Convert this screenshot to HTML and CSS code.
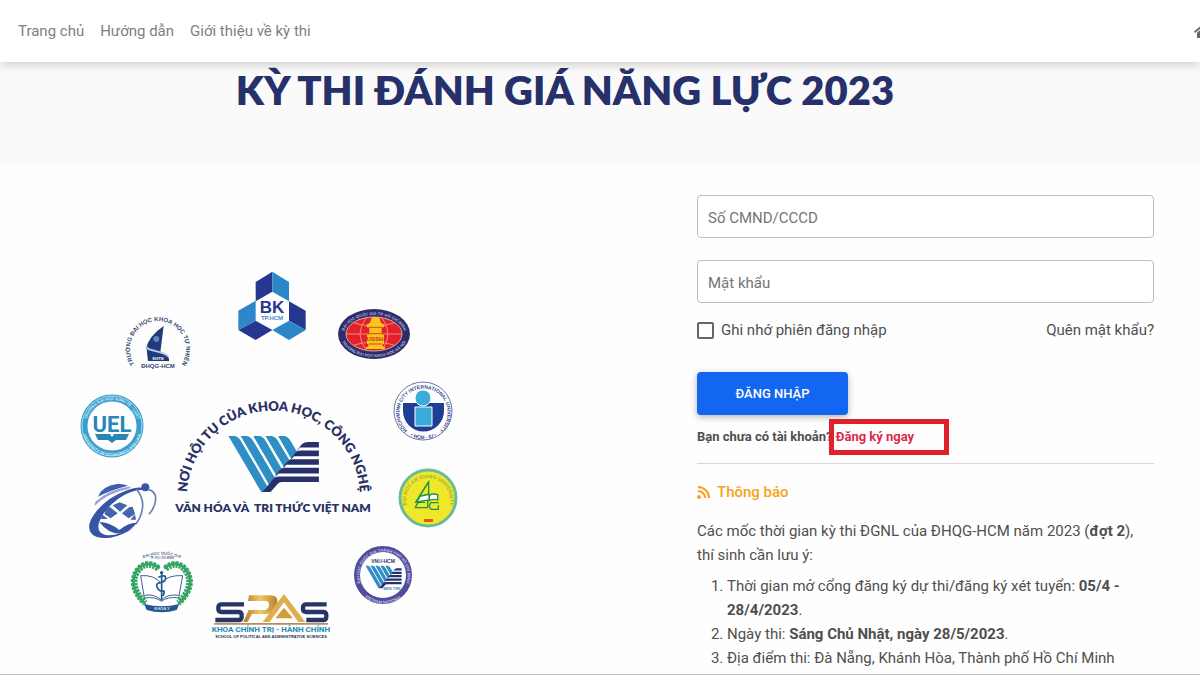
FILE: index.html
```
<!DOCTYPE html>
<html lang="vi">

<head>
    <meta charset="UTF-8">
    <meta name="viewport" content="width=device-width, initial-scale=1.0">
    <title>Kỳ thi đánh giá năng lực 2023</title>
    <link rel="stylesheet" href="styles.css">
</head>

<body>
    <header class="navbar">
        <nav>
            <a href="#">Trang chủ</a>
            <a href="#">Hướng dẫn</a>
            <a href="#">Giới thiệu về kỳ thi</a>
        </nav>
        <a href="#" class="home" aria-label="Home">
            <svg width="18" height="16" viewBox="0 0 18 16" fill="#666">
                <path d="M9 1 0 8.500l1.200 1.400L9 3.400l7.800 6.500L18 8.500l-3-2.500V2h-2v2.300z" />
                <path d="M9 4.800 3 9.800V15h4.500v-4h3v4H15V9.800z" />
            </svg>
        </a>
    </header>

    <div class="banner">
        <h1>KỲ THI ĐÁNH GIÁ NĂNG LỰC 2023</h1>
    </div>

    <main>
        <div class="logos">
            <svg viewBox="60 260 420 390" role="img" aria-label="Các trường thành viên">
                <defs>
                    <symbol id="vnu" viewBox="200 165 280 175">
                        <g fill="#2f8fc5">
                            <path d="M204 168h18q13 2 21 17l78 134-9 18h-9z" />
                            <path d="M241 168h18q13 2 21 17l64 109-18 20z" />
                            <path d="M279 168h18q13 2 21 17l48 84-17 19z" />
                            <path d="M316 168h18q13 2 21 17l34 58-17 20z" />
                            <path d="M354 168h18q13 2 21 17l19 33-18 20z" />
                        </g>
                        <g fill="#27306b">
                            <path d="M477 186v17h-57l-18 20 21-27q8-10 22-10z" />
                            <path d="M477 212v17h-75l-16 16 18-24q7-9 16-9z" />
                            <path d="M477 238v17h-99l-16 16 18-24q7-9 16-9z" />
                            <path d="M477 264v17h-122l-16 16 18-24q7-9 16-9z" />
                            <path d="M477 290v17h-112q-8 0-14 7l-20 23h-24l30-37q8-10 20-10z" />
                        </g>
                    </symbol>
                    <linearGradient id="gold">
                        <stop offset="0" stop-color="#b5792a" />
                        <stop offset=".5" stop-color="#f1ca63" />
                        <stop offset="1" stop-color="#b8802f" />
                    </linearGradient>
                    <path id="arc-main" d="M187 497A86 86 0 0 1 360 497" />
                    <path id="arc-khtn" d="M135 365A28 28 0 1 1 181 365" />
                    <path id="arc-ussh-top" d="M344 334A30 19 0 0 1 404 334" />
                    <path id="arc-ussh-bottom" d="M340 334A34 23 0 0 0 408 334" />
                    <path id="arc-uel-top" d="M86 426A26 26 0 0 1 138 426" />
                    <path id="arc-uel-bottom" d="M82 426A30 30 0 0 0 142 426" />
                    <path id="arc-iu" d="M407 430A24 24 0 1 1 440 430" />
                    <path id="arc-iu-bottom" d="M406 433A28 28 0 0 0 441 433" />
                    <path id="arc-ag" d="M411 514A22 22 0 1 1 445 514" />
                    <path id="arc-med" d="M142 559Q162 550 182 559" />
                    <path id="arc-dgnl" d="M366 592A24 24 0 1 1 401 592" />
                    <path id="arc-dgnl-bottom" d="M362 594A29 29 0 0 0 405 594" />
                </defs>

                <!-- khoa hoc tu nhien -->
                <g transform="translate(60 260) scale(.3333)">
                    <path fill="#223a7a" d="M311 198l-10 79q-25-12-43-10 8-39 53-69z" />
                    <path fill="#223a7a" d="M260 268q27-4 43 8 26 10 25 27h-64z" />
                    <path fill="none" stroke="#b9cbe4" stroke-width="6" d="M258 259q3 10 25 13 34 9 42 17" />
                    <circle cx="289" cy="237" r="9" fill="#5f83bd" />
                </g>
                <text class="tiny" x="158" y="360" fill="#fff" font-size="4">KHTN</text>
                <text class="tiny" x="158" y="368" fill="#35456f" font-size="6">ĐHQG-HCM</text>
                <text class="arc" fill="#35456f" font-size="6"><textPath href="#arc-khtn" startOffset="50%">TRƯỜNG ĐẠI HỌC KHOA HỌC TỰ NHIÊN</textPath></text>

                <!-- bach khoa -->
                <g transform="translate(220 260) scale(.3333)">
                    <g fill="#27378f">
                        <path d="M107 66l50-31v60l-50 29z" />
                        <path d="M55 210l52-28 50 28-50 30z" />
                        <path d="M207 124l50 28v58l-50-28z" />
                    </g>
                    <g fill="#2d86ca">
                        <path d="M157 35l50 31v58l-50-29z" />
                        <path d="M55 152l52-30v60l-52 28z" />
                        <path d="M157 210l50-28 50 28-50 30z" />
                    </g>
                </g>
                <text class="tiny" x="272" y="313" fill="#27378f" font-size="17">BK</text>
                <text class="tiny" x="272" y="320" fill="#4a8cc4" font-size="6">TP.HCM</text>

                <!-- ussh -->
                <ellipse cx="374" cy="334" rx="36" ry="25" fill="#2d2c6c" />
                <ellipse cx="374" cy="334" rx="28" ry="17" fill="#e3212b" stroke="#d9b0a0" />
                <path d="M346 334h56M354 323q20 6 40 0M354 345q20-6 40 0M366 318q-12 16 0 32M382 318q12 16 0 32" fill="none" stroke="#f08a76" />
                <g transform="translate(220 260) scale(.3333)">
                    <path fill="#fbc31c" d="M456 172h22l5 16 10 6v8h-8v22h7v28h-4v8h7v7h-57v-7h7v-8h-4v-28h7v-22h-8v-8l10-6z" />
                    <path stroke="#d6451f" stroke-width="3" d="M448 202h37M448 221h37M447 252h38" />
                </g>
                <text class="tiny" x="375" y="341" fill="#c3301f" font-size="6">USSH</text>
                <text class="arc" fill="#b4b3d6" font-size="4"><textPath href="#arc-ussh-top" startOffset="50%">ĐẠI HỌC QUỐC GIA TP. HỒ CHÍ MINH</textPath></text>
                <text class="arc" fill="#b4b3d6" font-size="4"><textPath href="#arc-ussh-bottom" startOffset="50%">TRƯỜNG ĐẠI HỌC KHOA HỌC XÃ HỘI</textPath></text>

                <!-- uel -->
                <circle cx="112" cy="426" r="28" fill="none" stroke="#3a9fce" stroke-width="7" />
                <circle cx="112" cy="426" r="30" fill="none" stroke="#a9d7ea" />
                <text class="arc" fill="#d5edf6" font-size="4"><textPath href="#arc-uel-top" startOffset="50%">TRƯỜNG ĐẠI HỌC KINH TẾ - LUẬT</textPath></text>
                <text class="arc" fill="#d5edf6" font-size="4"><textPath href="#arc-uel-bottom" startOffset="50%">UNIVERSITY OF ECONOMICS AND LAW</textPath></text>
                <text class="uel" x="112" y="432" fill="#2788b8">UEL</text>
                <path d="M95 434h15l2 3 2-3h15l-3 6h-10l-4 3-4-3H98z" fill="#2788b8" />

                <!-- cntt -->
                <g transform="translate(60 380) scale(.3333)">
                    <path fill="#3f5fae" d="M114 350q12-32 57-38 22-1 33 5-52 13-90 33z" />
                    <path fill="#94a5cf" d="M106 366q42-39 108-47l-9 8q-60 10-102 51z" />
                    <path fill="#3656a5" d="M252 325q-14-8-55 7-58 21-94 70-27 39-8 59 16 17 56 12 35-6 71-30-49 26-84 22-31-5-20-40 14-38 57-69 41-29 77-26z" />
                    <circle cx="256" cy="322" r="12" fill="#3656a5" />
                    <path fill="none" stroke="#6e7fb4" stroke-width="5" d="M266 329q20 5 21 26 1 24-20 48M229 327q24 29 18 60-4 26-19 45" />
                    <path fill="#3656a5" d="M118 426q30 0 60 24 28-23 53-22-24 31-53 33-34-1-60-35z" />
                    <path fill="#4465b0" d="M158 376l21-9 23 9-22 19zM151 382l22 18-21 15-19-13 8-22zM207 382l-21 18 20 15 19-13-7-22zM126 403l18 14h-21zM225 403l3 16h-17z" />
                    <path fill="#fff" d="M180 406l17 17-18 22-17-22z" />
                </g>

                <!-- y khoa -->
                <g transform="translate(110 535) scale(.3333)">
                    <path fill="none" stroke="#35a566" stroke-width="8" d="M149 100q-36-28-65 2-36 47 22 105M162 100q36-28 65 2 36 47-22 105" />
                    <path fill="none" stroke="#35a566" stroke-width="20" stroke-dasharray="8 3" d="M145 100q-34-25-59 3-35 46 19 101M166 100q34-25 59 3 35 46-19 101" />
                    <path fill="#fff" stroke="#3b6190" stroke-width="3" d="M92 122q40-3 61 22 22-25 65-22l-12 67q-33-5-52 10-18-15-51-10z" />
                    <path fill="none" stroke="#3b6190" stroke-width="3" d="M103 181q30-5 51 14 20-19 52-14" />
                    <path fill="none" stroke="#27578f" stroke-width="5" d="M155 116v80M145 127q22-10 22 2t-16 14-9 15 16 10 1 15" />
                    <circle cx="155" cy="113" r="5" fill="#27578f" />
                    <path fill="#27578f" d="M102 207q54 14 106 0l-8 18q-44 14-90 0z" />
                </g>
                <text class="tiny" x="162" y="610" fill="#d7e3f1" font-size="4">KHOA Y</text>
                <text class="arc" fill="#64718f" font-size="4"><textPath href="#arc-med" startOffset="50%">ĐẠI HỌC QUỐC GIA</textPath></text>
                <text class="tiny" x="162" y="559" fill="#64718f" font-size="3">TP. HỒ CHÍ MINH</text>

                <!-- spas -->
                <g transform="translate(200 535) scale(.3333)">
                    <g fill="none" stroke="#263468" stroke-width="13">
                        <path d="M132 208H65q-10 0-10 10v4q0 9 10 9h50q10 0 10 10v4q0 10-10 10H46" />
                        <path d="M380 208h-61q-10 0-10 10v4q0 9 10 9h50q10 0 10 10v4q0 10-10 10h-50" />
                    </g>
                    <path fill="url(#gold)" d="M147 181h65q22 1 20 20-3 32-31 36h-45l-13 24h-13l16-36h47q12-1 14-14 1-13-11-13h-52z" />
                    <path fill="#e0ad4e" d="M252 177l64 84h-21l-43-59-43 59h-21z" />
                    <path fill="#d29b3c" d="M252 218l27 32h-53z" />
                    <path fill="#b98b60" d="M43 264h341v5H43z" />
                </g>
                <text class="spas" x="271" y="632" fill="#2289af">KHOA CHÍNH TRỊ - HÀNH CHÍNH</text>
                <text class="tiny" x="271" y="638" fill="#26304f" font-size="4">SCHOOL OF POLITICAL AND ADMINISTRATIVE SCIENCES</text>

                <!-- iu -->
                <circle cx="423" cy="411" r="29" fill="#fff" stroke="#6674ad" />
                <path d="M403 403h41v8a20 20 0 0 1-41 0z" fill="#1d3d96" />
                <path d="M415 407h17v19h-17z" fill="#3aabda" stroke="#fff" />
                <circle cx="423" cy="398" r="8" fill="#3aabda" stroke="#fff" />
                <text class="arc" fill="#34478d" font-size="5"><textPath href="#arc-iu" startOffset="50%">HOCHIMINH CITY INTERNATIONAL UNIVERSITY</textPath></text>
                <text class="arc" fill="#34478d" font-size="5"><textPath href="#arc-iu-bottom" startOffset="50%">• HCM - IU •</textPath></text>

                <!-- an giang -->
                <circle cx="428" cy="498" r="28" fill="#eee72a" stroke="#68bb9b" stroke-width="3" />
                <g transform="translate(380 370) scale(.3333)" fill="#fff" stroke="#1f9447" stroke-width="4">
                    <path d="M146 336v36l-28 8z" fill="#eee72a" />
                    <path d="M145 336l-38 61h28" fill="none" />
                    <path d="M120 379l27-6v17l-36 6zM148 376q11-7 25-2v16q-13-4-25 2z" />
                    <path d="M105 413h38v-22M105 413l10-16M176 398h-24q-9 14 3 20h20v-12" fill="none" />
                </g>
                <path d="M424 519h9v3h-9z" fill="#df5a24" />
                <text class="arc" fill="#a5ad43" font-size="5"><textPath href="#arc-ag" startOffset="50%">ĐẠI HỌC AN GIANG UNIVERSITY</textPath></text>

                <!-- vnu tron -->
                <circle cx="383" cy="575" r="26" fill="#fff" stroke="#4e4e9b" stroke-width="6" />
                <text class="arc" fill="#c6c6e4" font-size="4"><textPath href="#arc-dgnl" startOffset="50%">ĐẠI HỌC QUỐC GIA THÀNH PHỐ HỒ CHÍ MINH</textPath></text>
                <text class="arc" fill="#c6c6e4" font-size="4"><textPath href="#arc-dgnl-bottom" startOffset="50%">VIETNAM NATIONAL</textPath></text>
                <text class="tiny" x="383" y="563" fill="#2f3770" font-size="5">VNU-HCM</text>
                <use href="#vnu" x="365" y="565" width="37" height="24" />
                <text class="tiny" x="392" y="590" fill="#4b8eb9" font-size="4">BẾN TRE</text>

                <!-- dhqg-hcm -->
                <use href="#vnu" x="227" y="435" width="93" height="58" />
                <text class="slogan" font-size="13"><textPath href="#arc-main" startOffset="50%">NƠI HỘI TỤ CỦA KHOA HỌC, CÔNG NGHỆ</textPath></text>
                <text class="slogan" x="273" y="512" font-size="12">VĂN HÓA VÀ&nbsp; TRI THỨC VIỆT NAM</text>
            </svg>
        </div>

        <section class="login">
            <form>
                <input type="text" class="field" placeholder="Số CMND/CCCD" aria-label="Số CMND/CCCD">
                <input type="password" class="field" placeholder="Mật khẩu" aria-label="Mật khẩu">
                <div class="options">
                    <label for="remember"><input type="checkbox" id="remember">Ghi nhớ phiên đăng nhập</label>
                    <a href="#">Quên mật khẩu?</a>
                </div>
                <button type="submit">ĐĂNG NHẬP</button>
            </form>
            <p class="register">Bạn chưa có tài khoản? <a href="#">Đăng ký ngay</a></p>

            <div class="notice">
                <h2>
                    <svg width="14" height="14" viewBox="0 0 14 14" fill="none" stroke="#f5a31a" stroke-width="2">
                        <circle cx="2" cy="12" r="1" fill="#f5a31a" />
                        <path d="M1 6a7 7 0 0 1 7 7M1 2a11 11 0 0 1 11 11" />
                    </svg>
                    Thông báo
                </h2>
                <p>Các mốc thời gian kỳ thi ĐGNL của ĐHQG-HCM năm 2023 (<b>đợt 2</b>), thí sinh cần lưu ý:</p>
                <ol>
                    <li>Thời gian mở cổng đăng ký dự thi/đăng ký xét tuyển: <b>05/4 - 28/4/2023</b>.</li>
                    <li>Ngày thi: <b>Sáng Chủ Nhật, ngày 28/5/2023</b>.</li>
                    <li>Địa điểm thi: Đà Nẵng, Khánh Hòa, Thành phố Hồ Chí Minh</li>
                </ol>
            </div>
        </section>
    </main>
</body>

</html>
```

FILE: styles.css
```
*,
*::after {
    box-sizing: border-box;
}

body {
    margin: 0;
    height: 100vh;
    overflow: hidden;
    display: flex;
    flex-direction: column;
    border-bottom: 1px solid #cdb9d3;
    background: #fefefe;
    color: #4f4f4f;
    font-family: Roboto, "Liberation Sans", sans-serif;
    font-size: 15px;
    line-height: 24px;
}

a {
    color: inherit;
    text-decoration: none;
}

.navbar {
    position: relative;
    flex: none;
    display: flex;
    justify-content: space-between;
    align-items: center;
    height: 62px;
    padding-left: 18px;
    background: #fff;
    box-shadow: 0 2px 10px rgba(0, 0, 0, 0.2);
}

.navbar nav {
    display: flex;
    gap: 16px;
    color: #808080;
}

.home {
    display: flex;
    margin-right: -12px;
}

.banner {
    flex: none;
    height: 104px;
    padding-right: 70px;
    background: #fafafa;
    text-align: center;
}

h1 {
    margin: 0;
    color: #26306b;
    font-family: Lato, sans-serif;
    font-size: 40px;
    font-weight: 800;
    line-height: 56px;
}

main {
    flex: 1;
    min-height: 0;
    display: grid;
    grid-template-columns: 697fr 457fr;
    padding-right: 46px;
}

.logos {
    padding: 94px 0 0 60px;
}

.logos svg {
    display: block;
    width: 420px;
}

.tiny,
.arc,
.slogan,
.uel,
.spas {
    font-family: "Liberation Sans", sans-serif;
    font-weight: bold;
    text-anchor: middle;
}

.slogan {
    font-family: Lato, sans-serif;
    font-weight: 800;
    fill: #2a3166;
}

.uel {
    font-family: Roboto, sans-serif;
    font-size: 22px;
}

.spas {
    font-family: Roboto, sans-serif;
    font-size: 8px;
}

.login {
    padding-top: 29px;
}

.field {
    display: block;
    width: 100%;
    height: 43px;
    margin-bottom: 22px;
    padding: 2px 10px 0;
    border: 1px solid #bdbdbd;
    border-radius: 4px;
    background: #fff;
    font: inherit;
}

.field::placeholder {
    color: #757575;
}

.options {
    display: flex;
    justify-content: space-between;
    margin-top: -7px;
}

.options label {
    display: flex;
    align-items: center;
}

.options input {
    appearance: none;
    width: 17px;
    height: 17px;
    margin: 0 7px 0 0;
    border: 2px solid #666;
    border-radius: 2px;
}

button {
    display: block;
    width: 151px;
    height: 43px;
    margin: 30px 0 10px;
    border: 0;
    border-radius: 4px;
    background: #1266f1;
    box-shadow: 0 2px 7px rgba(0, 0, 0, 0.3);
    color: #fff;
    font: 500 13px Roboto, sans-serif;
}

.register {
    margin: 0;
    padding-bottom: 14px;
    border-bottom: 1px solid #d8d8d8;
    font-size: 13px;
    font-weight: bold;
}

.register a {
    position: relative;
    color: #e0284f;
}

/* red frame round the sign-up link */
.register a::after {
    content: "";
    position: absolute;
    top: -10px;
    left: -7px;
    width: 120px;
    height: 36px;
    border: 5px solid #e0202a;
}

h2 {
    display: flex;
    align-items: center;
    gap: 6px;
    margin: 16px 0 15px;
    color: #f5a31a;
    font-size: 15px;
    font-weight: 500;
    line-height: 24px;
}

.notice p {
    margin: 0 0 7px;
    padding-right: 16px;
}

.notice ol {
    margin: 0;
    padding-left: 30px;
}
```
